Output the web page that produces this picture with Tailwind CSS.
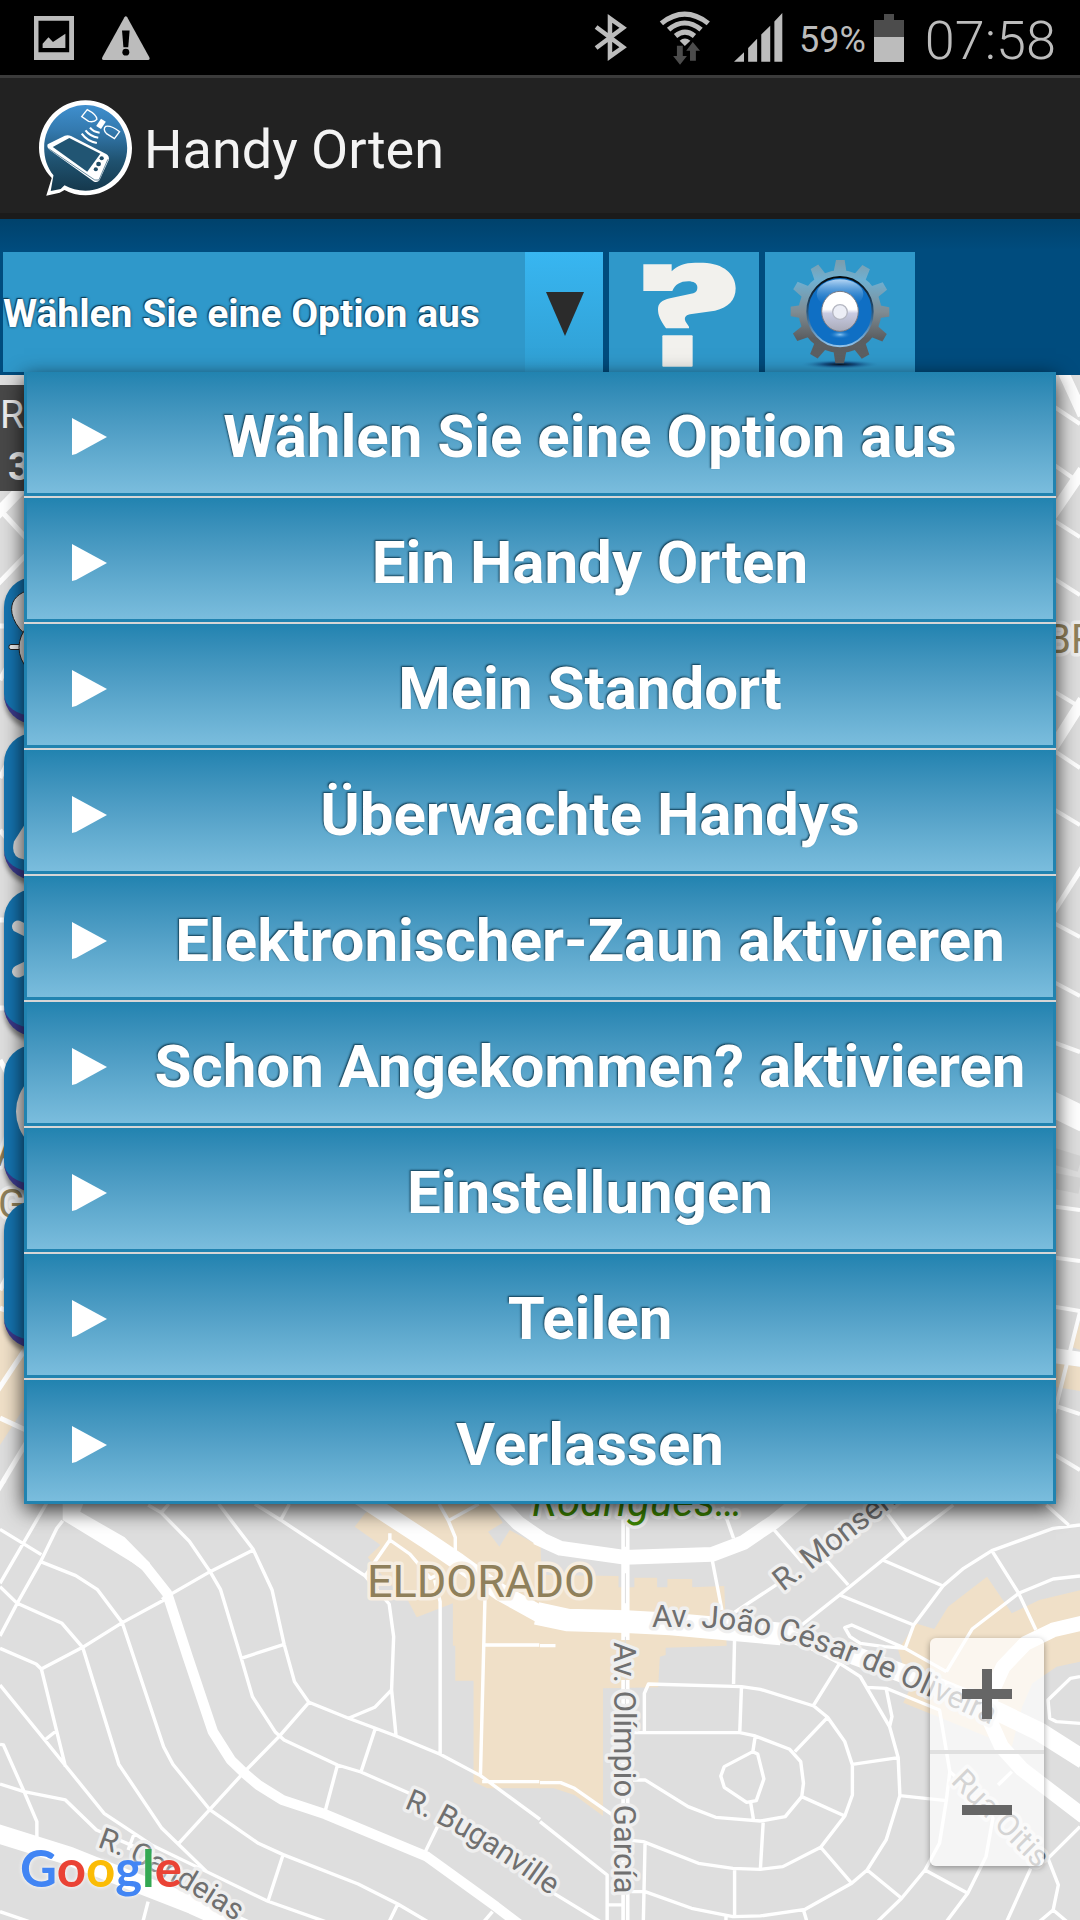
<!DOCTYPE html>
<html lang="de">
<head>
<meta charset="utf-8">
<meta name="viewport" content="width=device-width, initial-scale=1">
<title>Handy Orten</title>
<script src="https://cdn.jsdelivr.net/npm/@tailwindcss/browser@4"></script>
</head>
<body class="min-h-screen flex flex-col bg-[#dedede] font-[Roboto,sans-serif] overflow-x-hidden">

<!-- Status bar -->
<div class="h-[75px] bg-black flex items-center justify-between pl-[34px] pr-6 text-[#bcbcbc]">
  <div class="flex items-center gap-7">
    <svg class="w-10 h-11" viewBox="99 48 116 132" preserveAspectRatio="none" fill="currentColor"><path fill-rule="evenodd" d="M99 48H215V180H99ZM112 62V157H201V62Z"/><path d="M124 144V131L141 112L154 126L190 101V144Z"/></svg>
    <svg class="w-12 h-11" viewBox="297 50 139 130" preserveAspectRatio="none"><path fill="currentColor" d="M362 54Q366 48 370 54L434 172Q437 180 430 180H302Q295 180 298 172Z"/><path d="M355 93H377L373 142H359Z"/><ellipse cx="366" cy="157" rx="10" ry="10"/></svg>
  </div>
  <div class="flex items-center">
    <svg class="w-[34px] h-[49px]" viewBox="156 38 98 146" preserveAspectRatio="none" fill="none" stroke="currentColor" stroke-width="13"><path d="M162 80L240 140L202 168V54L240 82L162 142"/></svg>
    <svg class="w-[51px] h-[54px] ml-[31px]" viewBox="346 28 148 162" preserveAspectRatio="none"><g fill="none" stroke="currentColor" stroke-width="15"><path d="M353 65Q420 10 489 65"/><path d="M374 84Q420 44 468 84"/><path d="M394 103Q421 80 449 103"/></g><path fill="currentColor" d="M406 117Q421 104 437 117L421 133Z"/><path fill="#4c4c4c" d="M398 132H415V163H427L407 189L387 163H398ZM436 177V147H425L444 121L465 147H453V177Z"/></svg>
    <svg class="w-[49px] h-[49px] ml-6" viewBox="560 38 142 146" preserveAspectRatio="none" fill="currentColor"><path d="M560 183L589 155V183ZM601 183V142L627 115V183ZM639 183V102L665 76V183ZM677 183V63L700 38V183Z"/></svg>
    <span class="text-4xl ml-4 pt-1">59%</span>
    <svg class="w-[30px] h-12 ml-2 mr-px" viewBox="970 36 87 144" preserveAspectRatio="none"><path fill="#4c4c4c" d="M970 54H999V36H1028V54H1057V110H970Z"/><path fill="currentColor" d="M970 105H1057V180H970Z"/></svg>
    <span class="text-[54px] font-light ml-5 pt-1.5">07:58</span>
  </div>
</div>

<!-- Title bar -->
<header class="h-36 bg-[#222] border-t-3 border-t-[#3b3b3b] border-b-6 border-b-[#1b1b1b] flex items-center gap-3 pl-[39px] pt-1">
  <svg class="w-[93px] h-24" viewBox="112 296 270 288" preserveAspectRatio="none" aria-hidden="true">
    <defs><linearGradient id="logo" x1="0" y1="0" x2="0" y2="1"><stop offset="0" stop-color="#3f8fce"/><stop offset=".3" stop-color="#3379ae"/><stop offset=".65" stop-color="#1f5270"/><stop offset="1" stop-color="#15384c"/></linearGradient></defs>
    <path fill="#fff" d="M247 297C322 297 382 362 382 440C382 518 322 582 247 582C225 582 204 576 186 566L172 574L133 583L149 530C126 505 112 474 112 440C112 362 172 297 247 297Z"/>
    <path fill="url(#logo)" d="M247 311C313 311 368 368 368 440C368 510 313 568 247 568C224 568 204 562 186 552L175 563L146 569L154 522C136 499 127 471 127 440C127 368 181 311 247 311Z"/>
    <path fill="#fff" d="M137 429L187 403Q196 400 205 404L307 458Q318 465 314 477L288 536Q282 545 272 541L142 445Q134 438 137 429Z"/>
    <path fill="#215573" d="M152 437L200 410L290 457L252 511Z"/>
    <path fill="none" stroke="#215573" stroke-width="2" d="M140 442L274 536L286 536L312 474"/>
    <g fill="#1f4c66"><circle cx="294" cy="471" r="6"/><circle cx="285" cy="488" r="7"/><circle cx="277" cy="504" r="6"/></g>
    <g fill="none" stroke="#fff" stroke-width="4"><path d="M252 325L236 346L256 360Q272 364 280 354Q280 340 252 325Z"/><path d="M346 391L331 412L308 397Q296 384 306 375Q322 372 346 391Z"/><path stroke-width="6" d="M236 397Q252 420 280 425M247 387Q260 405 284 409M260 379Q270 392 288 394"/></g>
    <path fill="#fff" d="M292 352L306 361L292 383L278 374Z"/>
  </svg>
  <h1 class="text-[54px] text-[#f3f3f3] pt-1">Handy Orten</h1>
</header>

<!-- Toolbar -->
<div class="h-39 pt-[33px] pl-[3px] pb-[3px] bg-linear-to-b from-[#00426c] via-[#004c7e] via-20% to-[#004c7e] flex gap-1.5">
  <div class="relative w-[600px] flex">
    <label for="option" class="sr-only">Option</label>
    <select id="option" class="appearance-none w-full h-full pt-1 bg-[#2f98ca] text-white text-[39px] font-bold [text-shadow:-1px_-1px_1px_#0f3a50,0_0_3px_#0f3a50]">
      <option>Wählen Sie eine Option aus</option>
    </select>
    <span class="absolute right-0 inset-y-0 w-[78px] pt-1 pl-0.5 bg-linear-to-b from-[#38b6f1] to-[#309fd3] flex items-center justify-center pointer-events-none">
      <svg class="w-[38px] h-11" viewBox="0 0 38 44"><path fill="#2b2b2b" d="M0 0H38L19 44Z"/></svg>
    </span>
  </div>
  <button class="w-[150px] bg-[#2f98ca]" aria-label="Hilfe">
    <svg class="w-full h-full" viewBox="87 126 450 360" fill="#f2f1ed"><path d="M190 163H275V184C290 168 315 158 345 158H370C430 160 467 192 467 235C467 270 445 293 405 302L330 313C315 316 312 325 317 335L327 350V355H258C240 330 234 315 234 298C234 280 245 271 270 265L340 250C350 247 352 240 352 232C352 220 340 214 325 214C300 214 285 224 277 243H190Z"/><rect x="247" y="376" width="91" height="94" rx="3"/></svg>
  </button>
  <button class="w-[150px] bg-[#2f98ca]" aria-label="Optionen">
    <svg class="w-full h-full" viewBox="555 126 450 360">
      <defs>
        <linearGradient id="metal" x1="0" y1="0" x2="0" y2="1"><stop offset="0" stop-color="#7c9cab"/><stop offset=".2" stop-color="#6fb0d2"/><stop offset=".5" stop-color="#7f8c93"/><stop offset=".75" stop-color="#5b5e61"/><stop offset="1" stop-color="#5c6063"/></linearGradient>
        <linearGradient id="rim" x1="0" y1="0" x2="0" y2="1"><stop offset="0" stop-color="#04080c"/><stop offset=".5" stop-color="#27557c"/><stop offset="1" stop-color="#8fc4ee"/></linearGradient>
        <linearGradient id="gloss" x1="0" y1="0" x2="0" y2="1"><stop offset="0" stop-color="#b5d6f5"/><stop offset="1" stop-color="#0f6fc4" stop-opacity="0"/></linearGradient>
        <linearGradient id="hub" x1="0" y1="0" x2="0" y2="1"><stop offset="0" stop-color="#fff"/><stop offset=".45" stop-color="#fff"/><stop offset=".55" stop-color="#c8cbe2"/><stop offset="1" stop-color="#a9aab8"/></linearGradient>
        <radialGradient id="glow"><stop offset="0" stop-color="#8cc8f5"/><stop offset="1" stop-color="#0f6fc4" stop-opacity="0"/></radialGradient>
        <radialGradient id="ground"><stop offset="0" stop-color="#06121f"/><stop offset=".4" stop-color="#124a80" stop-opacity=".9"/><stop offset="1" stop-color="#2f98ca" stop-opacity="0"/></radialGradient>
        <path id="tooth" d="M760 190L768 150H794L800 190Z"/>
        <mask id="gear" maskUnits="userSpaceOnUse" x="555" y="126" width="450" height="360"><g fill="#fff"><circle cx="780" cy="305" r="124"/><use href="#tooth"/><use href="#tooth" transform="rotate(30 780 305)"/><use href="#tooth" transform="rotate(60 780 305)"/><use href="#tooth" transform="rotate(90 780 305)"/><use href="#tooth" transform="rotate(120 780 305)"/><use href="#tooth" transform="rotate(150 780 305)"/><use href="#tooth" transform="rotate(180 780 305)"/><use href="#tooth" transform="rotate(210 780 305)"/><use href="#tooth" transform="rotate(240 780 305)"/><use href="#tooth" transform="rotate(270 780 305)"/><use href="#tooth" transform="rotate(300 780 305)"/><use href="#tooth" transform="rotate(330 780 305)"/></g></mask>
      </defs>
      <ellipse cx="780" cy="463" rx="120" ry="14" fill="url(#ground)"/>
      <rect x="632" y="148" width="296" height="316" fill="url(#metal)" mask="url(#gear)"/>
      <ellipse cx="780" cy="305" rx="98" ry="104" fill="#0f6fc4" stroke="url(#rim)" stroke-width="6"/>
      <ellipse cx="780" cy="252" rx="70" ry="44" fill="url(#gloss)"/>
      <ellipse cx="780" cy="374" rx="34" ry="13" fill="url(#glow)"/>
      <ellipse cx="780" cy="304" rx="55" ry="60" fill="url(#hub)" stroke="#777b86" stroke-width="3"/>
      <circle cx="780" cy="306" r="22" fill="#eceef6" stroke="#b5b7c2" stroke-width="4"/>
    </svg>
  </button>
</div>

<!-- Map -->
<main class="relative flex-1 min-h-[1545px]">
  <svg class="absolute inset-0 w-full h-full" viewBox="0 375 1080 1545" preserveAspectRatio="xMinYMin slice" font-family="Roboto, sans-serif" role="img" aria-label="Karte">
    <rect y="375" width="1080" height="1545" fill="#dedede"/>
    <g fill="#f0e0c8"><path d="M0 1285L12 1300L26 1345V1405L0 1445Z"/><path d="M1050 1361L1080 1367V1391L1050 1386ZM1072 1347L1080 1322V1350Z"/></g>
    <g stroke="#fff" stroke-width="4" fill="none">
      <path d="M1050 404L1080 424M1050 462L1080 483M1050 518L1080 537M1050 576L1080 595M1050 632L1080 651M1050 689L1080 707M1050 748L1080 768M1050 807L1080 825M1050 921L1080 937M1050 980L1080 996M1050 1041L1080 1052M1050 1206L1080 1210M1050 1257L1080 1261M1050 1306L1080 1311M1080 1312L1050 1430M1050 1404L1080 1414M1050 1452L1080 1470"/>
      <path stroke-width="11" d="M1060 365L1083 415M1050 518L1083 470M1050 752L1083 700"/>
      <path stroke-width="5" d="M1050 918L1083 866"/>
      <path stroke-width="25" d="M1050 1103L1085 1120"/><path stroke-width="15" d="M1050 1355L1085 1360"/>
      <path stroke="#d3d3d3" stroke-width="16" d="M1050 1155L1080 1164M1050 1180L1080 1186"/>
      <path stroke-width="5" d="M4 514L28 540M-3 585L28 553M0 626H6M0 680L8 665M0 778L8 762M0 830L8 840M0 920H6M0 1008H6M0 1060L8 1075M0 1290L8 1275M0 1308L20 1316M-2 1390L28 1345M0 1418L28 1431M-2 1490L28 1440"/>
      <path stroke-width="11" d="M-4 515L28 482"/>
    </g>

    <g transform="translate(0 1480) scale(.3444 .3333)" fill="none" stroke="#fff" stroke-linejoin="round">
      <path stroke="none" fill="#f0e0c8" d="M1125 60H1420L1460 128L1417 155L1450 200L1480 150L1570 200V925H1415L1375 905V602H1322V497H1315V370L1210 412L1185 362L1120 300L1068 232L1105 195L1030 140L1060 100Z"/>
      <path stroke="none" fill="#fff" d="M182 50H250L233 95L362 172L436 250L420 275L385 248L182 120Z"/>
      <path stroke-width="30" d="M345 200L420 255L485 340L545 530L618 755L670 840L710 880L750 915L820 960L945 1003L1240 1130L1440 1280L1510 1335"/>
      <path stroke-width="52" d="M1030 40L1240 182L1330 245L1450 335L1572 405"/>
      <path stroke-width="44" d="M1430 50L1505 130L1572 178"/>
      <path stroke-width="56" d="M-10 1060L200 1128L400 1210L560 1275L720 1350"/>
      <g stroke-width="10">
        <path d="M135 70L0 310M0 148L120 224M182 122L165 145L118 245L50 370L0 468M118 245L220 287L282 328L355 428L475 800L502 853L610 990L750 1090L822 1124L1040 1212L1155 1272L1250 1330M0 320L50 370L180 430L240 502L345 853L470 1045L600 1175L778 1264L945 1325M0 505L105 552L120 567L240 502L355 428L480 358M120 567L190 860M163 753L130 780M0 615L130 780L302 1000L440 1095L600 1175M0 793L10 795L70 935L107 1025V1075M0 912L70 935L190 960L280 1050L390 1100M390 1060L372 1110M470 358L610 275L735 210M430 75L468 98L550 184L610 275L640 328L700 533L733 650L800 757L825 780L980 855L1048 876L1200 945M490 72L468 98M635 72L735 208L790 330L825 493L855 605L897 667L1012 715L1090 745L1150 768L1278 823L1395 887L1568 1018M700 535L825 493M897 667L810 770L710 875L515 1095M1090 745L1048 876M980 855L945 990M822 1124L778 1264M740 72L815 120L1060 288L1130 372L1143 470L1137 630L1150 768M840 72L815 120M1137 630L1088 682L1012 715M1278 823V365L1262 300M1408 360L1395 887M1405 495H1568M1400 905H1568M1132 160V180L1060 288M1132 180L1190 222L1250 295L1278 280M1275 72L1302 122L1322 172V215M1302 122L1390 72M1275 1030L1235 1115M430 1265L415 1325M1155 1272L1130 1325M1430 1295L1405 1325M0 1295L85 1325M0 20L15 0"/>
      </g>
    </g>

    <g transform="translate(540 1480) scale(.3444 .3333)" fill="none" stroke="#fff" stroke-linejoin="round">
      <path stroke="none" fill="#f0e0c8" d="M-2 205L10 285L228 288V322H274V293H340V322H370V297H442V322L535 318L542 497L365 503V525L348 530L343 622L183 625V1008L100 945L40 925H-2ZM1298 290L1370 400L1450 360L1570 330V545L1500 560L1430 610L1400 680L1370 800L1055 668L1075 625L1040 510L1090 430L1145 447L1185 380Z"/>
      <path stroke-width="44" d="M-10 172L60 205L245 232L500 223L590 188L680 125L770 50"/>
      <path stroke-width="68" d="M-10 400L80 420L250 425L380 432L700 462"/>
      <path stroke-width="56" d="M640 458L740 465L870 510L1130 610L1330 695L1450 755L1580 840"/>
      <path stroke-width="44" d="M1580 428L1490 450L1410 490L1345 560L1310 640L1305 720L1340 800L1400 868L1580 1010"/>
      <path stroke-width="24" d="M248 50V480M248 600V1330"/>
      <path stroke="#dedede" stroke-width="3" d="M248 130V200M248 280V370M248 470V1330"/>
      <g stroke-width="10">
        <path d="M500 240L528 390M530 80L562 175M680 150L760 245L835 245L895 315M1000 90L1065 180M560 400L700 305M1200 75L1065 180L995 240L870 345L760 435M995 240L1170 318M870 345L1085 435M1060 505L1085 435L1170 318L1230 265L1312 212L1490 145L1568 135M1312 212L1390 340L1440 450M1568 288L1490 297L1390 340L1255 447L1180 575M1470 75L1535 135M1060 505L1180 575M1060 505L1000 500L930 490L900 470L885 443L905 435L1060 505M0 497H45M0 908H60L100 925L210 1005M0 1025L195 1185V1325M200 1275H240M250 1080L300 1085L460 1150L560 1165L640 1168L705 1160L815 1102L885 1008L907 945V855L885 785L835 712L795 678L640 628L585 620L315 612L303 640V758M565 475L562 612M585 620L580 758M270 758H580L625 768L725 808L757 845L765 910L760 950L712 1010L640 1023L510 1012L430 980L305 900H270M625 768L618 815L535 860L525 888L535 922L600 967L628 962L650 897L632 822L618 815M612 970L620 1020M740 815L835 712M760 950L885 1008M907 853L1040 833M648 1028L640 1165M565 1170V1305M305 1090L300 1325M265 1235H305L440 1285L560 1310L640 1308L770 1288L905 1210L950 1170L1005 1080L1045 947L1040 833L1015 740L930 590L870 550L740 480L540 465M870 550L795 675M950 622L1005 625L1160 690L1190 875L1180 960L1160 1090L1118 1170L1050 1255L980 1325M1005 625L1022 710L1015 740M1045 947L1180 962M815 1102L905 1210M950 1170L1050 1255M1118 1170L1242 1240M1190 875L1250 930L1315 1015L1295 1130L1242 1240L1180 1325M1330 915L1370 875M1568 1040L1475 1135L1505 1215L1490 1290L1450 1325M1490 1290L1530 1325M1425 1165L1355 1325M765 1290L775 1325M540 1310V1325M1568 590L1540 595L1475 660L1480 715L1500 725L1568 730M0 1215L175 1325"/>
      </g>
    </g>

    <defs>
      <path id="p1" d="M652 1627H690C780 1629 840 1655 1000 1729"/>
      <path id="p2" d="M404 1808Q470 1833 580 1918"/>
      <path id="p3" d="M97 1847Q160 1867 280 1952"/>
    </defs>
    <g font-size="31" fill="#707070" stroke="#efefef" stroke-width="7" stroke-linejoin="round" paint-order="stroke">
      <text><textPath href="#p1">Av. João César de Oliveira</textPath></text>
      <text font-size="30"><textPath href="#p2">R. Buganville</textPath></text>
      <text font-size="30"><textPath href="#p3">R. Candeias</textPath></text>
      <text transform="translate(614 1642) rotate(90)">Av. Olímpio García</text>
      <text transform="translate(783 1592) rotate(-38)">R. Monsenhor</text>
      <text transform="translate(950 1782) rotate(45)">Rua Oitis</text>
      <text x="532" y="1516" font-size="42" font-style="italic" fill="#3c8500">Rodrigues…</text>
      <g fill="#8f805b" font-size="40">
        <text x="367" y="1597" font-size="45" stroke="#f6ede0">ELDORADO</text>
        <text x="1046" y="653">BR</text><text x="-4" y="1166">A</text><text x="-2" y="1218">G</text>
      </g>
    </g>
  </svg>

  <div class="absolute top-2.5 left-0 w-32 h-[106px] pt-1 bg-[#484848] text-[#eee] text-[39px] leading-[52px]">
    <p>R</p>
    <p class="pl-2 font-bold">3</p>
  </div>

  <!-- Map actions -->
  <div class="absolute top-[202px] left-1 flex flex-col gap-[9px]">
    <button class="w-36 h-[147px] rounded-[30px] bg-[#1574b0] border-b-8 border-[#3b3a8c] shadow-[0_5px_4px_rgba(0,0,0,0.4)]" aria-label="Handy orten"><svg class="w-full h-full" viewBox="0 0 144 138" fill="#dcdcdc" stroke="#222" stroke-width="1"><path d="M72 10C30 6 4 14 8 36Q10 46 20 56H72Z"/><rect x="5" y="67" width="30" height="5" rx="2" fill="#eee"/><circle cx="45" cy="70" r="30"/></svg></button>
    <button class="w-36 h-[147px] rounded-[30px] bg-[#1574b0] border-b-8 border-[#3b3a8c] shadow-[0_5px_4px_rgba(0,0,0,0.4)]" aria-label="Standort"><svg class="w-full h-full" viewBox="0 0 144 138" fill="#dcdcdc"><path d="M72 10L10 108Q6 124 20 126H72Z"/></svg></button>
    <button class="w-36 h-[147px] rounded-[30px] bg-[#1574b0] border-b-8 border-[#3b3a8c] shadow-[0_5px_4px_rgba(0,0,0,0.4)]" aria-label="Zaun"><svg class="w-full h-full" viewBox="0 0 144 138" stroke="#dcdcdc" stroke-width="12" stroke-linecap="round"><path d="M14 37L60 60M14 82L60 60"/></svg></button>
    <button class="w-36 h-[147px] rounded-[30px] bg-[#1574b0] border-b-8 border-[#3b3a8c] shadow-[0_5px_4px_rgba(0,0,0,0.4)]" aria-label="Ankunft"><svg class="w-full h-full" viewBox="0 0 144 138" fill="#dcdcdc"><circle cx="56" cy="66" r="44"/></svg></button>
    <button class="w-36 h-[147px] rounded-[30px] bg-[#1574b0] border-b-8 border-[#3b3a8c] shadow-[0_5px_4px_rgba(0,0,0,0.4)]" aria-label="Mehr"></button>
  </div>

  <!-- Zoom -->
  <div class="absolute right-9 bottom-[54px] w-[114px] h-57 rounded-md bg-white/70 shadow-[0_2px_6px_rgba(0,0,0,0.35)] flex flex-col divide-y-4 divide-[#e0e0e0]">
    <button class="flex-1 flex items-center justify-center" aria-label="Vergrößern"><svg class="w-[50px] h-[50px]" viewBox="0 0 50 50" fill="#666"><path d="M20 0H30V20H50V30H30V50H20V30H0V20H20Z"/></svg></button>
    <button class="flex-1 flex items-center justify-center" aria-label="Verkleinern"><svg class="w-[50px] h-2.5" viewBox="0 0 50 10" fill="#666"><path d="M0 0H50V10H0Z"/></svg></button>
  </div>

  <div class="absolute left-5 bottom-[18px] font-[Lato,sans-serif] font-bold text-[51px] leading-[68px] text-[#4285f4] [text-shadow:0_0_4px_#fff]"><span>G</span><span class="text-[#ea4335]">o</span><span class="text-[#fbbc05]">o</span><span>g</span><span class="text-[#34a853]">l</span><span class="text-[#ea4335]">e</span></div>

  <!-- Option menu -->
  <ul class="absolute -top-[3px] inset-x-6 flex flex-col gap-0.5 bg-[#d6d6d6] shadow-[0_6px_20px_rgba(0,0,0,0.8)] text-white text-[60px] font-bold">
    <li><button class="w-full h-31 pt-2 pl-[45px] flex items-center gap-5 border-3 border-t-0 border-[#2183b0] bg-linear-to-b from-[#2183b0] to-[#7abddd] [text-shadow:-1px_-1px_2px_#0f3a50]"><svg class="w-[35px] h-[37px] shrink-0" viewBox="0 0 35 37" fill="#fff"><path d="M0 0L35 19L4 36L0 37Z"/></svg><span class="flex-1 whitespace-nowrap">Wählen Sie eine Option aus</span></button></li>
    <li><button class="w-full h-31 pt-2 pl-[45px] flex items-center gap-5 border-3 border-t-0 border-[#2183b0] bg-linear-to-b from-[#2183b0] to-[#7abddd] [text-shadow:-1px_-1px_2px_#0f3a50]"><svg class="w-[35px] h-[37px] shrink-0" viewBox="0 0 35 37" fill="#fff"><path d="M0 0L35 19L4 36L0 37Z"/></svg><span class="flex-1 whitespace-nowrap">Ein Handy Orten</span></button></li>
    <li><button class="w-full h-31 pt-2 pl-[45px] flex items-center gap-5 border-3 border-t-0 border-[#2183b0] bg-linear-to-b from-[#2183b0] to-[#7abddd] [text-shadow:-1px_-1px_2px_#0f3a50]"><svg class="w-[35px] h-[37px] shrink-0" viewBox="0 0 35 37" fill="#fff"><path d="M0 0L35 19L4 36L0 37Z"/></svg><span class="flex-1 whitespace-nowrap">Mein Standort</span></button></li>
    <li><button class="w-full h-31 pt-2 pl-[45px] flex items-center gap-5 border-3 border-t-0 border-[#2183b0] bg-linear-to-b from-[#2183b0] to-[#7abddd] [text-shadow:-1px_-1px_2px_#0f3a50]"><svg class="w-[35px] h-[37px] shrink-0" viewBox="0 0 35 37" fill="#fff"><path d="M0 0L35 19L4 36L0 37Z"/></svg><span class="flex-1 whitespace-nowrap">Überwachte Handys</span></button></li>
    <li><button class="w-full h-31 pt-2 pl-[45px] flex items-center gap-5 border-3 border-t-0 border-[#2183b0] bg-linear-to-b from-[#2183b0] to-[#7abddd] [text-shadow:-1px_-1px_2px_#0f3a50]"><svg class="w-[35px] h-[37px] shrink-0" viewBox="0 0 35 37" fill="#fff"><path d="M0 0L35 19L4 36L0 37Z"/></svg><span class="flex-1 whitespace-nowrap">Elektronischer-Zaun aktivieren</span></button></li>
    <li><button class="w-full h-31 pt-2 pl-[45px] flex items-center gap-5 border-3 border-t-0 border-[#2183b0] bg-linear-to-b from-[#2183b0] to-[#7abddd] [text-shadow:-1px_-1px_2px_#0f3a50]"><svg class="w-[35px] h-[37px] shrink-0" viewBox="0 0 35 37" fill="#fff"><path d="M0 0L35 19L4 36L0 37Z"/></svg><span class="flex-1 whitespace-nowrap">Schon Angekommen? aktivieren</span></button></li>
    <li><button class="w-full h-31 pt-2 pl-[45px] flex items-center gap-5 border-3 border-t-0 border-[#2183b0] bg-linear-to-b from-[#2183b0] to-[#7abddd] [text-shadow:-1px_-1px_2px_#0f3a50]"><svg class="w-[35px] h-[37px] shrink-0" viewBox="0 0 35 37" fill="#fff"><path d="M0 0L35 19L4 36L0 37Z"/></svg><span class="flex-1 whitespace-nowrap">Einstellungen</span></button></li>
    <li><button class="w-full h-31 pt-2 pl-[45px] flex items-center gap-5 border-3 border-t-0 border-[#2183b0] bg-linear-to-b from-[#2183b0] to-[#7abddd] [text-shadow:-1px_-1px_2px_#0f3a50]"><svg class="w-[35px] h-[37px] shrink-0" viewBox="0 0 35 37" fill="#fff"><path d="M0 0L35 19L4 36L0 37Z"/></svg><span class="flex-1 whitespace-nowrap">Teilen</span></button></li>
    <li><button class="w-full h-31 pt-2 pl-[45px] flex items-center gap-5 border-3 border-t-0 border-[#2183b0] bg-linear-to-b from-[#2183b0] to-[#7abddd] [text-shadow:-1px_-1px_2px_#0f3a50]"><svg class="w-[35px] h-[37px] shrink-0" viewBox="0 0 35 37" fill="#fff"><path d="M0 0L35 19L4 36L0 37Z"/></svg><span class="flex-1 whitespace-nowrap">Verlassen</span></button></li>
  </ul>
</main>
</body>
</html>
